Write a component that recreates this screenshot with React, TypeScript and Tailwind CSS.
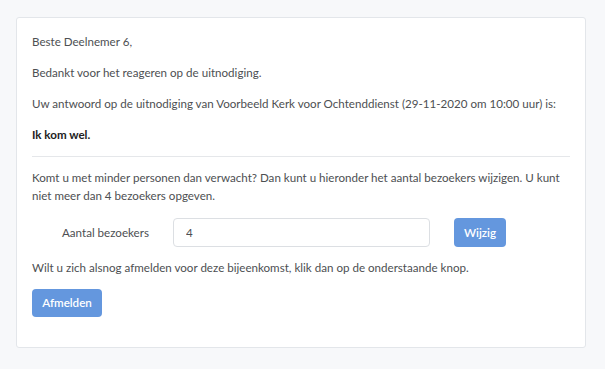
export default function App() {
  return (
    <div className="min-h-[369px] w-[605px] bg-[#f7f8fa] pt-[17px] pl-[16px] font-['Lato','Noto_Sans',sans-serif] text-[11.6px] leading-[18px] text-[#4d4f52]">
      <div className="w-[570px] h-[331px] bg-white border border-[#e3e6ea] rounded-[3px] px-[15px] pt-[15px]">
        <p className="mb-[13px]">Beste Deelnemer 6,</p>
        <p className="mb-[13px]">Bedankt voor het reageren op de uitnodiging.</p>
        <p className="mb-[13px]">
          Uw antwoord op de uitnodiging van Voorbeeld Kerk voor Ochtenddienst (29-11-2020 om 10:00 uur) is:
        </p>
        <p className="font-bold text-[#222]">Ik kom wel.</p>
        <hr className="mt-[12px] mb-[12px] border-t border-[#e5e7ea]" />
        <p className="mb-[13px]">
          Komt u met minder personen dan verwacht? Dan kunt u hieronder het aantal bezoekers wijzigen. U kunt niet meer dan 4 bezoekers opgeven.
        </p>
        <div className="flex items-center mb-[12px]">
          <label className="w-[141px] pl-[30px]">Aantal bezoekers</label>
          <input
            type="text"
            defaultValue="4"
            className="w-[257px] h-[29px] border border-[#dcdfe3] rounded-[4px] px-[12px] text-[11.6px] text-[#4d4f52] outline-none"
          />
          <button className="ml-[24px] w-[52px] h-[29px] rounded-[4px] bg-[#6497de] text-white font-semibold text-[11.6px]">
            Wijzig
          </button>
        </div>
        <p className="mb-[12px]">
          Wilt u zich alsnog afmelden voor deze bijeenkomst, klik dan op de onderstaande knop.
        </p>
        <button className="w-[70px] h-[28px] rounded-[4px] bg-[#6497de] text-white font-semibold text-[11.6px]">
          Afmelden
        </button>
      </div>
    </div>
  );
}
